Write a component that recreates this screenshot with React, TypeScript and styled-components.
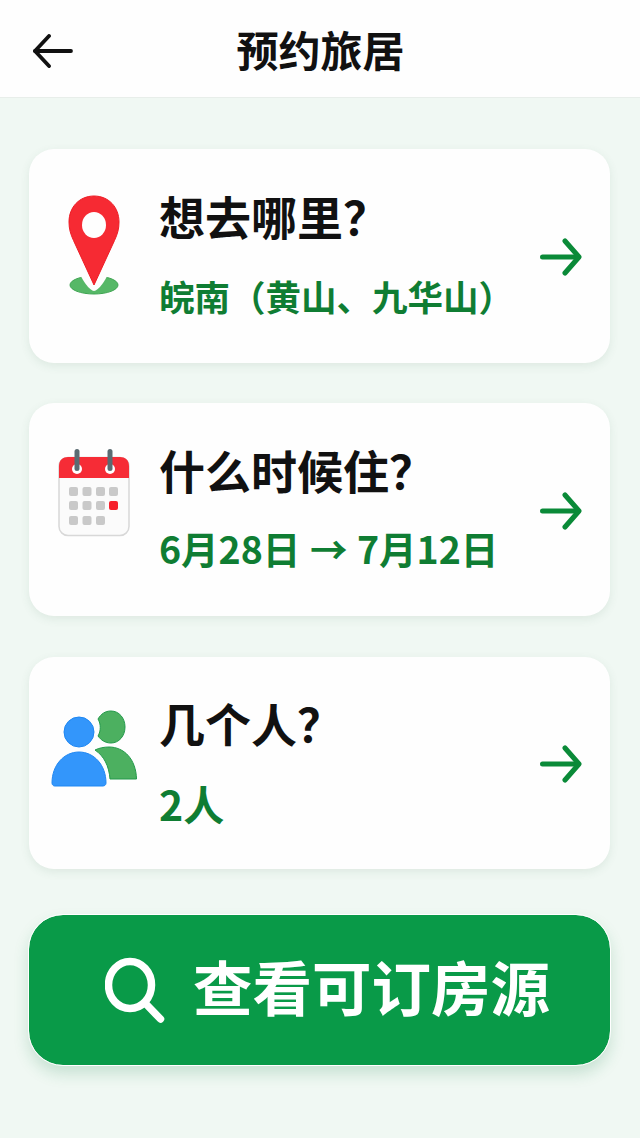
import React from "react";
import styled, { createGlobalStyle } from "styled-components";

const Global = createGlobalStyle`
  html, body { margin: 0; padding: 0; background: #f0f8f3; }
  * { box-sizing: border-box; }
`;

const FONT = `"Noto Sans CJK SC", "Noto Sans", sans-serif`;

const Page = styled.div`
  width: 640px;
  height: 1138px;
  overflow: hidden;
  background: #f0f8f3;
  font-family: ${FONT};
  display: flex;
  flex-direction: column;
`;

const Header = styled.header`
  height: 98px;
  flex: none;
  background: #fefefe;
  border-bottom: 1px solid #e8eeea;
  display: grid;
  grid-template-columns: 130px 1fr 130px;
  align-items: center;
  padding-left: 1px;
`;

const BackButton = styled.div`
  display: flex;
  padding-left: 31px;
  padding-top: 4px;
`;

const Title = styled.h1`
  margin: 0;
  text-align: center;
  font-size: 42px;
  line-height: 50px;
  font-weight: 700;
  color: #111111;
`;

const Main = styled.main`
  flex: 1;
  padding: 51px 30px 0 29px;
  display: flex;
  flex-direction: column;
`;

const Card = styled.section<{ $h: number; $mb: number }>`
  height: ${(p) => p.$h}px;
  margin-bottom: ${(p) => p.$mb}px;
  background: #fefefe;
  border-radius: 25px;
  box-shadow: 0 3px 10px rgba(60, 110, 80, 0.1);
  display: grid;
  grid-template-columns: 130px 1fr 70px;
  align-items: center;
`;

const IconSlot = styled.div<{ $lift: number }>`
  display: flex;
  justify-content: center;
  align-items: center;
  margin-bottom: ${(p) => p.$lift}px;
`;

const TextBlock = styled.div<{ $lift: number }>`
  display: flex;
  flex-direction: column;
  margin-bottom: ${(p) => p.$lift}px;
`;

const CardTitle = styled.div`
  font-size: 46px;
  line-height: 54px;
  font-weight: 700;
  color: #111111;
  white-space: nowrap;
`;

const CardValue = styled.div<{ $mt: number; $size: number; $word?: number }>`
  margin-top: ${(p) => p.$mt}px;
  font-size: ${(p) => p.$size}px;
  line-height: 44px;
  font-weight: 700;
  word-spacing: ${(p) => p.$word ?? 0}px;
  color: #0f7d33;
  white-space: nowrap;
`;

const ArrowSlot = styled.div`
  display: flex;
  padding-top: 2px;
`;

const SearchButton = styled.button`
  height: 150px;
  margin-top: 6px;
  border: none;
  outline: 1px solid #ffffff;
  border-radius: 34px;
  background: #099a48;
  box-shadow: 0 8px 16px rgba(20, 130, 70, 0.2);
  display: flex;
  align-items: center;
  justify-content: center;
  gap: 28px;
  padding: 0 0 0 16px;
  font-family: ${FONT};
`;

const ButtonLabel = styled.span`
  font-size: 59.500px;
  line-height: 70px;
  font-weight: 700;
  color: #ffffff;
  margin-bottom: 10px;
`;

const GoArrow = () => (
  <svg width="42" height="38" viewBox="0 0 42 38" fill="none" stroke="#0a8a38" strokeWidth="5" strokeLinecap="round" strokeLinejoin="round">
    <path d="M2.500 19H38" />
    <path d="M25 3L39 19L25 35" />
  </svg>
);

const PinIcon = () => (
  <svg width="54" height="100" viewBox="0 0 54 100">
    <ellipse cx="27" cy="90" rx="24" ry="9" fill="#56b867" stroke="#3fa552" strokeWidth="1" />
    <path d="M27 96C23 96 14 84 13 78L41 78C40 84 31 96 27 96Z" fill="#fefefe" />
    <path d="M27 1C12.500 1 2 12 2 27C2 34 3.500 39 6.500 45.500L27 90L47.500 45.500C50.500 39 52 34 52 27C52 12 41.500 1 27 1Z" fill="#f62a33" stroke="#ee1c25" strokeWidth="1" />
    <ellipse cx="27" cy="30" rx="12" ry="13" fill="#fefefe" />
  </svg>
);

const cells: [number, number, string][] = [
  [11, 39, "#c9c9c9"], [24.5, 39, "#c9c9c9"], [38, 39, "#c9c9c9"], [51, 39, "#c9c9c9"],
  [11, 53, "#c9c9c9"], [24.5, 53, "#c9c9c9"], [38, 53, "#c9c9c9"], [51, 53, "#f6202c"],
  [11, 68, "#c9c9c9"], [24.5, 68, "#c9c9c9"], [38, 68, "#c9c9c9"],
];

const CalendarIcon = () => (
  <svg width="72" height="90" viewBox="0 0 72 90">
    <rect x="1" y="9.500" width="70" height="78" rx="9" fill="#fbfbfb" stroke="#d8d8d8" strokeWidth="1.500" />
    <path d="M1 30V18C1 12 5 9 10 9H62C67 9 71 12 71 18V30Z" fill="#f62c36" />
    <circle cx="19" cy="21" r="5" fill="#fff" />
    <circle cx="52" cy="21" r="5" fill="#fff" />
    <rect x="16.500" y="1" width="5" height="22" rx="2.500" fill="#5a6b72" />
    <rect x="49.500" y="1" width="5" height="22" rx="2.500" fill="#5a6b72" />
    {cells.map(([x, y, c], i) => (
      <rect key={i} x={x} y={y} width="9" height="9" rx="2" fill={c} />
    ))}
  </svg>
);

const PeopleIcon = () => (
  <svg width="86" height="78" viewBox="0 0 86 78">
    <path d="M47 10C50 5 54 2 60 2C68 2 74 9 74 18C74 27 68 34 60 34C54 34 50 31 47 27C50 22 50 15 47 10Z" fill="#4cb060" stroke="#22994a" strokeWidth="1" />
    <path d="M44 41C48 39 53 38 58 38C73 38 85 50 85.500 70H59C58 57 53 47 44 41Z" fill="#4cb060" stroke="#22994a" strokeWidth="1" />
    <circle cx="28" cy="23" r="15" fill="#3396fb" stroke="#1f87f2" strokeWidth="1" />
    <path d="M1 74C1 56 13 43 28 43C43 43 55 56 55 74C55 74 55 77 52 77H4C1 77 1 74 1 74Z" fill="#3396fb" stroke="#1f87f2" strokeWidth="1" />
  </svg>
);

export default function App() {
  return (
    <Page>
      <Global />
      <Header>
        <BackButton>
          <svg width="42" height="34" viewBox="0 0 42 34" fill="none" stroke="#111111" strokeWidth="3.800" strokeLinecap="round" strokeLinejoin="round">
            <path d="M3 17H39" />
            <path d="M17 2L3 17L17 32" />
          </svg>
        </BackButton>
        <Title>预约旅居</Title>
      </Header>
      <Main>
        <Card $h={214} $mb={40}>
          <IconSlot $lift={22}><PinIcon /></IconSlot>
          <TextBlock $lift={6}>
            <CardTitle>想去哪里？</CardTitle>
            <CardValue $mt={32} $size={35.5}>皖南（黄山、九华山）</CardValue>
          </TextBlock>
          <ArrowSlot><GoArrow /></ArrowSlot>
        </Card>
        <Card $h={213} $mb={41}>
          <IconSlot $lift={33}><CalendarIcon /></IconSlot>
          <TextBlock $lift={8}>
            <CardTitle>什么时候住？</CardTitle>
            <CardValue $mt={30} $size={37.5} $word={1}>6月28日 → 7月12日</CardValue>
          </TextBlock>
          <ArrowSlot><GoArrow /></ArrowSlot>
        </Card>
        <Card $h={212} $mb={40}>
          <IconSlot $lift={30}><PeopleIcon /></IconSlot>
          <TextBlock $lift={6}>
            <CardTitle>几个人？</CardTitle>
            <CardValue $mt={32} $size={41}>2人</CardValue>
          </TextBlock>
          <ArrowSlot><GoArrow /></ArrowSlot>
        </Card>
        <SearchButton>
          <svg width="60" height="66" viewBox="0 0 60 66" fill="none" stroke="#fff" strokeWidth="7.500" strokeLinecap="round">
            <ellipse cx="25" cy="28" rx="21.500" ry="23.500" />
            <path d="M41 47L55.500 62" />
          </svg>
          <ButtonLabel>查看可订房源</ButtonLabel>
        </SearchButton>
      </Main>
    </Page>
  );
}
